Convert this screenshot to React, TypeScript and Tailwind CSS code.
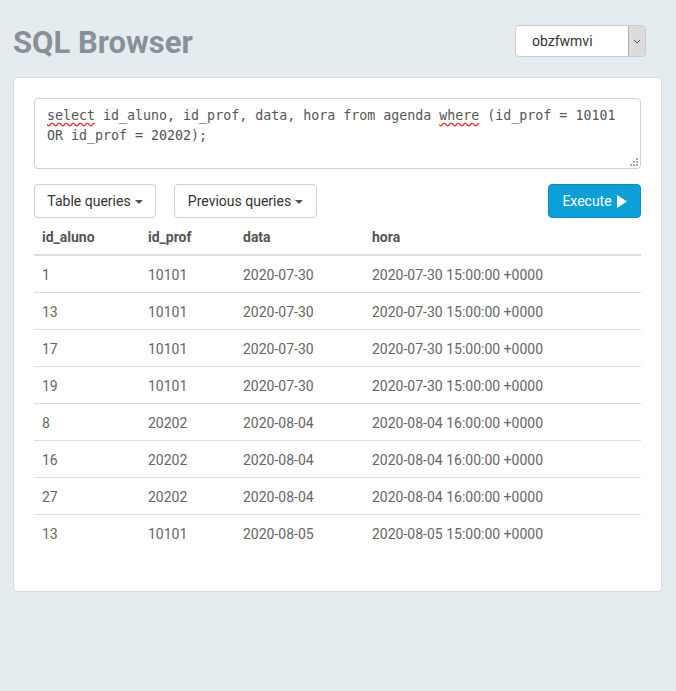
import React from 'react';

const rows = [
  ['1', '10101', '2020-07-30', '2020-07-30 15:00:00 +0000'],
  ['13', '10101', '2020-07-30', '2020-07-30 15:00:00 +0000'],
  ['17', '10101', '2020-07-30', '2020-07-30 15:00:00 +0000'],
  ['19', '10101', '2020-07-30', '2020-07-30 15:00:00 +0000'],
  ['8', '20202', '2020-08-04', '2020-08-04 16:00:00 +0000'],
  ['16', '20202', '2020-08-04', '2020-08-04 16:00:00 +0000'],
  ['27', '20202', '2020-08-04', '2020-08-04 16:00:00 +0000'],
  ['13', '10101', '2020-08-05', '2020-08-05 15:00:00 +0000'],
];

function Caret() {
  return <span className="ml-1 inline-block h-0 w-0 border-x-[4px] border-t-[4px] border-x-transparent border-t-[#555] align-middle" />;
}

export default function App() {
  return (
    <div className="min-h-[691px] bg-[#e5ecef] pl-[13px] pr-[14px] pt-[25px] pb-[99px] font-['Roboto',sans-serif] text-[14px] text-[#666]">
      <div className="flex h-[32px] items-center justify-between">
        <h1 className="mt-[4px] text-[31px] font-bold leading-[32px] text-[#8a9099]">SQL Browser</h1>
        <div className="mr-[16px] flex h-[32px] w-[131px] overflow-hidden rounded-[4px] border border-[#c9cdd1] bg-white">
          <span className="flex-1 pl-[16px] leading-[30px] text-[#333]">obzfwmvi</span>
          <span className="flex w-[17px] items-center justify-center border-l border-[#aaa] bg-[#dcdcdc]">
            <svg width="8" height="5" viewBox="0 0 8 5"><path d="M1 1l3 3 3-3" fill="none" stroke="#555" strokeWidth="1" /></svg>
          </span>
        </div>
      </div>

      <div className="mt-[20px] rounded-[4px] border border-[#d5dde3] bg-white px-[20px] pt-[20px] pb-[40px]">
        <div className="relative h-[71px] rounded-[4px] border border-[#cfcfcf] px-[12px] pt-[7px] font-['DejaVu_Sans_Mono',monospace] text-[13.3px] leading-[20px] text-[#555]">
          <span className="underline decoration-wavy decoration-[#e33] underline-offset-2">select</span> id_aluno, id_prof, data, hora from agenda <span className="underline decoration-wavy decoration-[#e33] underline-offset-2">where</span> (id_prof = 10101
          <br />
          OR id_prof = 20202);
          <svg className="absolute right-[2px] bottom-[2px]" width="8" height="8" viewBox="0 0 8 8">
            <rect x="6" y="0" width="2" height="2" fill="#aaa" />
            <rect x="3" y="3" width="2" height="2" fill="#aaa" />
            <rect x="6" y="3" width="2" height="2" fill="#aaa" />
            <rect x="0" y="6" width="2" height="2" fill="#aaa" />
            <rect x="3" y="6" width="2" height="2" fill="#aaa" />
            <rect x="6" y="6" width="2" height="2" fill="#aaa" />
          </svg>
        </div>

        <div className="mt-[15px] flex items-center">
          <button className="h-[34px] w-[122px] rounded-[4px] border border-[#cfcfcf] bg-white text-[14px] text-[#333]">
            Table queries<Caret />
          </button>
          <button className="ml-[18px] h-[34px] w-[143px] rounded-[4px] border border-[#cfcfcf] bg-white text-[14px] text-[#333]">
            Previous queries<Caret />
          </button>
          <button className="ml-auto flex h-[34px] w-[93px] items-center justify-center rounded-[4px] border border-[#0a8cc3] bg-[#0d9fd8] text-[14px] text-white">
            Execute
            <svg className="ml-[5px]" width="10" height="13" viewBox="0 0 10 13"><path d="M0 0l10 6.5L0 13z" fill="white" /></svg>
          </button>
        </div>

        <table className="mt-[3px] w-full border-collapse text-left">
          <thead>
            <tr className="border-b-2 border-[#ddd] text-[#555]">
              <th className="h-[34px] w-[106px] pl-[8px] font-bold">id_aluno</th>
              <th className="w-[95px] pl-[8px] font-bold">id_prof</th>
              <th className="w-[129px] pl-[8px] font-bold">data</th>
              <th className="pl-[8px] font-bold">hora</th>
            </tr>
          </thead>
          <tbody>
            {rows.map((r, i) => (
              <tr key={i} className={i < rows.length - 1 ? 'border-b border-[#ddd]' : ''}>
                {r.map((c, j) => (
                  <td key={j} className="h-[37px] pl-[8px] pt-[3px]">{c}</td>
                ))}
              </tr>
            ))}
          </tbody>
        </table>
      </div>
    </div>
  );
}
